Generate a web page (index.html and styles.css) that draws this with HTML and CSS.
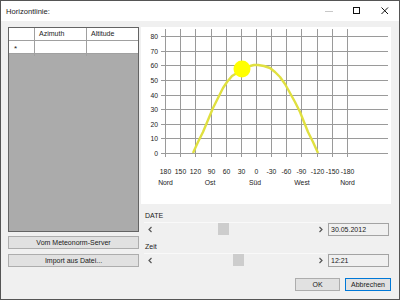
FILE: index.html
```html
<!DOCTYPE html>
<html lang="de">
<head>
    <meta charset="UTF-8">
    <title>Horizontlinie</title>
    <link rel="stylesheet" href="styles.css">
</head>
<body>

<div class="window">
    <!-- Titelleiste -->
    <div class="titlebar">
        <span class="title">Horizontlinie:</span>
        <div class="caption-buttons">
            <span class="cap-btn disabled">
                <svg width="10" height="10" viewBox="0 0 10 10"><path d="M1 5.5h8"/></svg>
            </span>
            <span class="cap-btn">
                <svg width="10" height="10" viewBox="0 0 10 10"><rect x="1.5" y="1.5" width="6" height="6"/></svg>
            </span>
            <span class="cap-btn">
                <svg width="10" height="10" viewBox="0 0 10 10"><path d="M1.5 1.5l6.5 6.5M8 1.5l-6.5 6.5"/></svg>
            </span>
        </div>
    </div>

    <div class="main">
        <!-- Tabelle + Import -->
        <div class="left-col">
            <div class="grid-view">
                <div class="gv-row gv-head">
                    <div class="gv-cell gv-rowhead"></div>
                    <div class="gv-cell">Azimuth</div>
                    <div class="gv-cell">Altitude</div>
                </div>
                <div class="gv-row">
                    <div class="gv-cell gv-rowhead">*</div>
                    <div class="gv-cell"></div>
                    <div class="gv-cell"></div>
                </div>
            </div>
            <button class="btn wide first">Vom Meteonorm-Server</button>
            <button class="btn wide">Import aus Datei...</button>
        </div>

        <!-- Diagramm + Regler -->
        <div class="right-col">
            <div class="chart">
                <svg width="250" height="177" viewBox="141 27 250 177">
                    <g class="grid-lines">
                        <line x1="161" y1="36.5" x2="388" y2="36.5"/>
                        <line x1="161" y1="51.5" x2="388" y2="51.5"/>
                        <line x1="161" y1="65.5" x2="388" y2="65.5"/>
                        <line x1="161" y1="80.5" x2="388" y2="80.5"/>
                        <line x1="161" y1="95.5" x2="388" y2="95.5"/>
                        <line x1="161" y1="109.5" x2="388" y2="109.5"/>
                        <line x1="161" y1="124.5" x2="388" y2="124.5"/>
                        <line x1="161" y1="138.5" x2="388" y2="138.5"/>
                        <line x1="161" y1="153.5" x2="388" y2="153.5"/>
                        <line x1="165.5" y1="29" x2="165.5" y2="157"/>
                        <line x1="180.5" y1="29" x2="180.5" y2="157"/>
                        <line x1="195.5" y1="29" x2="195.5" y2="157"/>
                        <line x1="211.5" y1="29" x2="211.5" y2="157"/>
                        <line x1="226.5" y1="29" x2="226.5" y2="157"/>
                        <line x1="241.5" y1="29" x2="241.5" y2="157"/>
                        <line x1="256.5" y1="29" x2="256.5" y2="157"/>
                        <line x1="271.5" y1="29" x2="271.5" y2="157"/>
                        <line x1="286.5" y1="29" x2="286.5" y2="157"/>
                        <line x1="301.5" y1="29" x2="301.5" y2="157"/>
                        <line x1="317.5" y1="29" x2="317.5" y2="157"/>
                        <line x1="332.5" y1="29" x2="332.5" y2="157"/>
                        <line x1="347.5" y1="29" x2="347.5" y2="157"/>
                    </g>
                    <g class="y-labels">
                        <text x="158" y="39">80</text>
                        <text x="158" y="54">70</text>
                        <text x="158" y="68">60</text>
                        <text x="158" y="83">50</text>
                        <text x="158" y="98">40</text>
                        <text x="158" y="112">30</text>
                        <text x="158" y="127">20</text>
                        <text x="158" y="141">10</text>
                        <text x="158" y="156">0</text>
                    </g>
                    <g class="x-labels">
                        <text x="165.5" y="174">180</text>
                        <text x="180.5" y="174">150</text>
                        <text x="195.5" y="174">120</text>
                        <text x="211.5" y="174">90</text>
                        <text x="226.5" y="174">60</text>
                        <text x="241.5" y="174">30</text>
                        <text x="256.5" y="174">0</text>
                        <text x="271.5" y="174">-30</text>
                        <text x="286.5" y="174">-60</text>
                        <text x="301.5" y="174">-90</text>
                        <text x="317.5" y="174">-120</text>
                        <text x="332.5" y="174">-150</text>
                        <text x="347.5" y="174">-180</text>
                        <text x="165.5" y="185">Nord</text>
                        <text x="210" y="185">Ost</text>
                        <text x="255" y="185">Süd</text>
                        <text x="302" y="185">West</text>
                        <text x="347.5" y="185">Nord</text>
                    </g>
                    <!-- Sonnenbahn -->
                    <polyline class="sun-path" points="193,153 198,142 203,132 208,120 213,108 218,98 223,88 227,82 232,76 242,70 250,66 254,65 258,65 264,66 270,68 275,72 280,77 285,84 290,93 295,102 300,112 304,122 308,132 313,142 318,153"/>
                    <circle class="sun" cx="242" cy="69" r="8.5"/>
                </svg>
            </div>

            <div class="field-label">DATE</div>
            <div class="scroll-row">
                <div class="scrollbar">
                    <span class="arrow"><svg width="13" height="13" viewBox="0 0 13 13"><path d="M7.5 4l-2.5 2.5 2.5 2.5"/></svg></span>
                    <div class="track"><span class="thumb" style="margin-left: 61px;"></span></div>
                    <span class="arrow"><svg width="13" height="13" viewBox="0 0 13 13"><path d="M5.5 4l2.5 2.5-2.5 2.5"/></svg></span>
                </div>
                <div class="textbox">30.05.2012</div>
            </div>

            <div class="field-label second">Zeit</div>
            <div class="scroll-row">
                <div class="scrollbar">
                    <span class="arrow"><svg width="13" height="13" viewBox="0 0 13 13"><path d="M7.5 4l-2.5 2.5 2.5 2.5"/></svg></span>
                    <div class="track"><span class="thumb" style="margin-left: 76px;"></span></div>
                    <span class="arrow"><svg width="13" height="13" viewBox="0 0 13 13"><path d="M5.5 4l2.5 2.5-2.5 2.5"/></svg></span>
                </div>
                <div class="textbox">12:21</div>
            </div>

            <div class="dialog-buttons">
                <button class="btn ok">OK</button>
                <button class="btn default">Abbrechen</button>
            </div>
        </div>
    </div>
</div>

</body>
</html>
```

FILE: styles.css
```css
/* Grundlayout */
body {
    margin: 0;
    font-family: "Liberation Sans", Arial, sans-serif;
    font-size: 7px;
    color: #1a1a1a;
    background: #fff;
}

.window {
    width: 400px;
    height: 300px;
    box-sizing: border-box;
    border: 1px solid #555;
    background: #f0f0f0;
    display: flex;
    flex-direction: column;
}

/* Titelleiste */
.titlebar {
    height: 20px;
    background: #fff;
    display: flex;
    align-items: center;
    padding-left: 5px;
}
.title {
    font-size: 7.6px;
    flex: 1;
}
.caption-buttons {
    display: flex;
    height: 100%;
}
.cap-btn {
    width: 28px;
    display: flex;
    justify-content: center;
    align-items: center;
}
.cap-btn svg {
    fill: none;
    stroke: #111;
    stroke-width: 1;
}
.cap-btn.disabled svg {
    stroke: #c8c8c8;
}

/* Hauptbereich */
.main {
    flex: 1;
    display: flex;
    padding: 6px 8px 0 7px;
}

.left-col {
    width: 131px;
    display: flex;
    flex-direction: column;
}

/* Tabelle */
.grid-view {
    height: 205px;
    box-sizing: border-box;
    border: 1px solid #646464;
    background: #ababab;
}
.gv-row {
    display: grid;
    grid-template-columns: 26px 52px 1fr;
    height: 13px;
    box-sizing: border-box;
    background: #fff;
    border-bottom: 1px solid #a0a0a0;
}
.gv-cell {
    border-right: 1px solid #a0a0a0;
    padding-left: 4px;
    line-height: 12px;
    white-space: nowrap;
}
.gv-cell:last-child {
    border-right: none;
}
.gv-rowhead {
    padding-left: 5px;
    font-size: 8px;
    line-height: 15px;
}

/* Schaltflaechen */
.btn {
    font-family: inherit;
    font-size: 7px;
    height: 13px;
    padding: 0;
    margin: 0;
    box-sizing: border-box;
    border: 1px solid #adadad;
    background: #e1e1e1;
    color: #1a1a1a;
    line-height: 11px;
}
.btn.wide {
    width: 131px;
    margin-top: 5px;
}
.btn.wide.first {
    margin-top: 4px;
}

/* Diagramm */
.right-col {
    width: 250px;
    margin-left: 2px;
    display: flex;
    flex-direction: column;
}
.chart {
    height: 177px;
    background: #fff;
}
.chart svg {
    display: block;
}
.grid-lines line {
    stroke: #9a9a9a;
    stroke-width: 1;
    shape-rendering: crispEdges;
}
.chart text {
    font-family: "Liberation Sans", Arial, sans-serif;
    font-size: 6.8px;
    fill: #1a1a1a;
}
.y-labels text {
    text-anchor: end;
}
.x-labels text {
    text-anchor: middle;
}
.sun-path {
    fill: none;
    stroke: #e0e040;
    stroke-width: 2.4;
    stroke-linejoin: round;
}
.sun {
    fill: #ffff00;
}

/* Regler */
.field-label {
    height: 12px;
    line-height: 12px;
    margin-top: 6px;
    padding-left: 4px;
}
.field-label.second {
    margin-top: 5px;
}
.scroll-row {
    height: 14px;
    display: flex;
    padding-left: 3px;
    gap: 1px;
}
.scrollbar {
    width: 183px;
    display: flex;
    border-top: 1px solid #f9f9f9;
    box-sizing: border-box;
}
.arrow {
    width: 13px;
    display: flex;
    align-items: center;
}
.arrow svg {
    fill: none;
    stroke: #555;
    stroke-width: 1.2;
}
.track {
    flex: 1;
    display: flex;
    align-items: flex-start;
}
.thumb {
    width: 11px;
    height: 12px;
    background: #cdcdcd;
}
.textbox {
    width: 61px;
    height: 13px;
    margin-top: 1px;
    box-sizing: border-box;
    border: 1px solid #a3a3a3;
    padding-left: 2px;
    line-height: 11px;
}

.dialog-buttons {
    display: flex;
    justify-content: flex-end;
    gap: 5px;
    margin-top: 11px;
}
.btn.ok {
    width: 45px;
}
.btn.default {
    width: 46px;
    border-color: #0078d7;
}
```
